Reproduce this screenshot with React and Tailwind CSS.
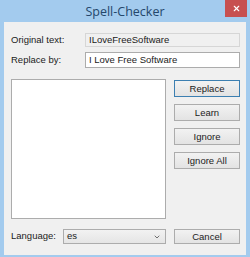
import { ChevronDown, X } from "lucide-react";

const buttons = ["Replace", "Learn", "Ignore", "Ignore All"];

function Btn({ label, primary }) {
  return (
    <button
      className={`h-[17px] w-[66px] border bg-gradient-to-b from-[#f2f2f2] to-[#e3e3e3] text-[9.5px] leading-none text-[#1b1b1b] ${
        primary ? "border-[#3c7fb1]" : "border-[#acacac]"
      }`}
    >
      {label}
    </button>
  );
}

export default function App() {
  return (
    <div
      className="flex h-[257px] w-[250px] flex-col bg-[#a3cbee]"
      style={{ fontFamily: '"Liberation Sans", Arial, sans-serif' }}
    >
      {/* Title bar */}
      <div className="relative flex h-[22px] shrink-0 items-center justify-center">
        <span className="pt-[3px] text-[12.5px] text-[#24476b]" style={{ fontFamily: '"Open Sans", sans-serif' }}>
          Spell-Checker
        </span>
        <div className="absolute right-[3px] top-0 flex h-[17px] w-[22px] items-center justify-center bg-[#c75050]">
          <X size={9} strokeWidth={3} className="text-white" />
        </div>
      </div>

      {/* Client area */}
      <div className="mx-[4px] mb-[2px] flex flex-1 flex-col bg-[#f0f0f0] pl-[7px] pr-[6px] pt-[11px] text-[9.5px] text-[#1b1b1b]">
        <div className="flex h-[14px] items-center">
          <span className="w-[74px]">Original text:</span>
          <div className="flex h-full flex-1 items-center border border-[#d6d6d6] bg-[#f0f0f0] pl-[3px]">
            ILoveFreeSoftware
          </div>
        </div>
        <div className="mt-[5px] flex h-[16px] items-center">
          <span className="w-[74px]">Replace by:</span>
          <div className="flex h-full flex-1 items-center border border-[#acacac] bg-white pl-[3px]">
            I Love Free Software
          </div>
        </div>

        <div className="mt-[11px] flex gap-[8px]">
          <div className="h-[140px] w-[155px] border border-[#acacac] bg-white" />
          <div className="mt-[1px] flex flex-col gap-[7px]">
            {buttons.map((b, i) => (
              <Btn key={b} label={b} primary={i === 0} />
            ))}
          </div>
        </div>

        <div className="mt-[10px] flex h-[15px] items-center gap-[8px]">
          <span className="w-[44px]">Language:</span>
          <div className="flex h-full w-[103px] items-center justify-between border border-[#acacac] bg-gradient-to-b from-[#f2f2f2] to-[#e5e5e5] pl-[3px] pr-[4px]">
            <span>es</span>
            <ChevronDown size={8} strokeWidth={2.5} className="text-[#555]" />
          </div>
          <button className="h-full w-[66px] border border-[#acacac] bg-gradient-to-b from-[#f2f2f2] to-[#e3e3e3] text-[9.5px] leading-none">
            Cancel
          </button>
        </div>
      </div>
    </div>
  );
}
